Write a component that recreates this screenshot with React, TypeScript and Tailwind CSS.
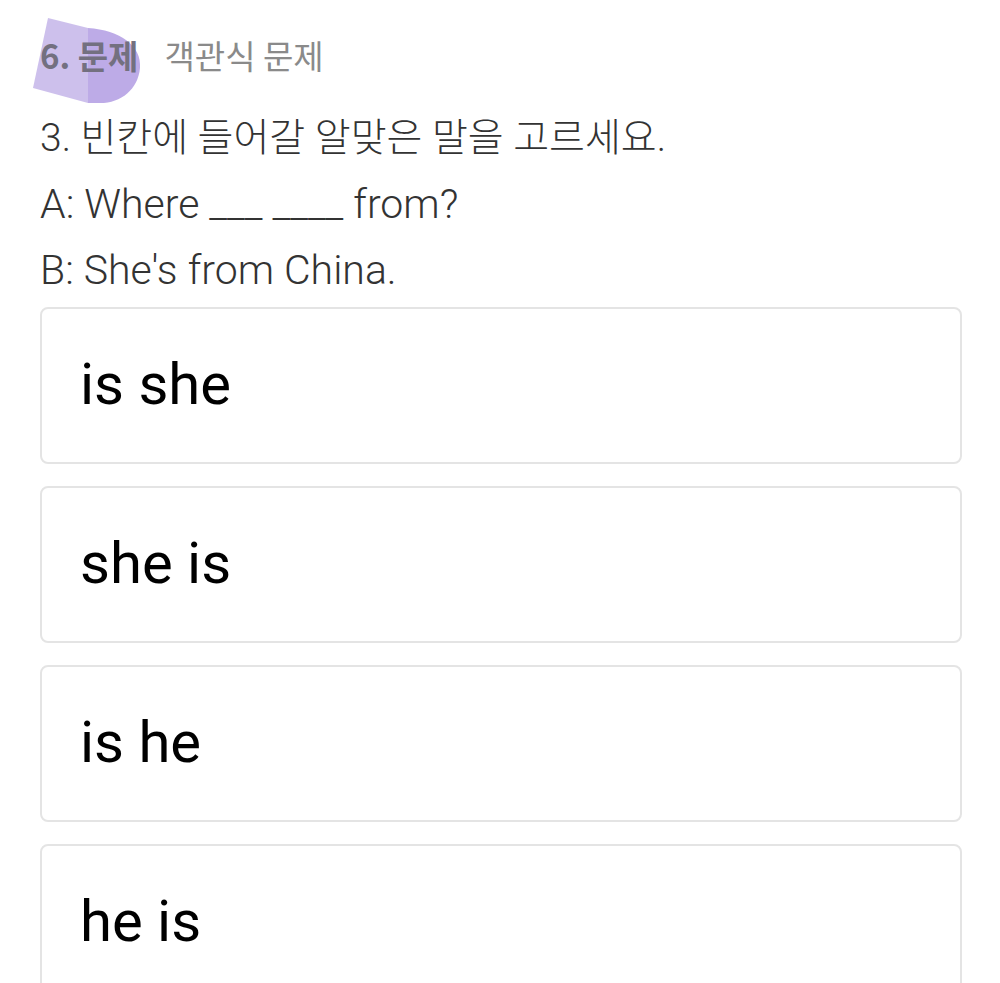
const options = ["is she", "she is", "is he", "he is"];

const latin = { fontFamily: 'Roboto, "Noto Sans CJK KR", sans-serif' };
const korean = { fontFamily: '"Noto Sans CJK KR", Roboto, sans-serif' };

const Blob = () => (
  <svg
    className="absolute left-[-10px] top-[-18px] pointer-events-none"
    width="115"
    height="92"
    viewBox="0 0 115 92"
  >
    <path d="M18 2 L58 12 L58 87 L3 72 Z" fill="#c8b9ea" opacity="0.9" />
    <path
      d="M58 12 C90 14 112 30 110 52 C108 74 90 88 68 87 L58 87 Z"
      fill="#b6a2e4"
      opacity="0.9"
    />
  </svg>
);

export default function App() {
  return (
    <div className="min-h-[983px] w-[1000px] bg-white overflow-hidden">
      <div className="px-[40px] pt-[34px]">
        <div className="relative flex items-center h-[44px]" style={korean}>
          <Blob />
          <span className="relative text-[33px] font-bold text-[#737080]">6. 문제</span>
          <span className="relative ml-[26px] text-[33px] text-[#8a8a8a]">객관식 문제</span>
        </div>

        <div className="mt-[27px] flex flex-col text-[#333] font-light" style={latin}>
          <p className="text-[39px] leading-[66px] h-[66px]">3. 빈칸에 들어갈 알맞은 말을 고르세요.</p>
          <p className="text-[41px] leading-[66px] h-[66px]">A: Where ___ ____ from?</p>
          <p className="text-[41px] leading-[66px] h-[66px]">B: She's from China.</p>
        </div>

        <div className="mt-[4px] flex flex-col gap-[22px] w-[922px]">
          {options.map((o) => (
            <div
              key={o}
              className="h-[157px] flex items-center pl-[38px] pb-[2px] rounded-[8px] border-2 border-[#e4e4e4] bg-white"
            >
              <span className="text-[58px] text-black" style={latin}>
                {o}
              </span>
            </div>
          ))}
        </div>
      </div>
    </div>
  );
}
